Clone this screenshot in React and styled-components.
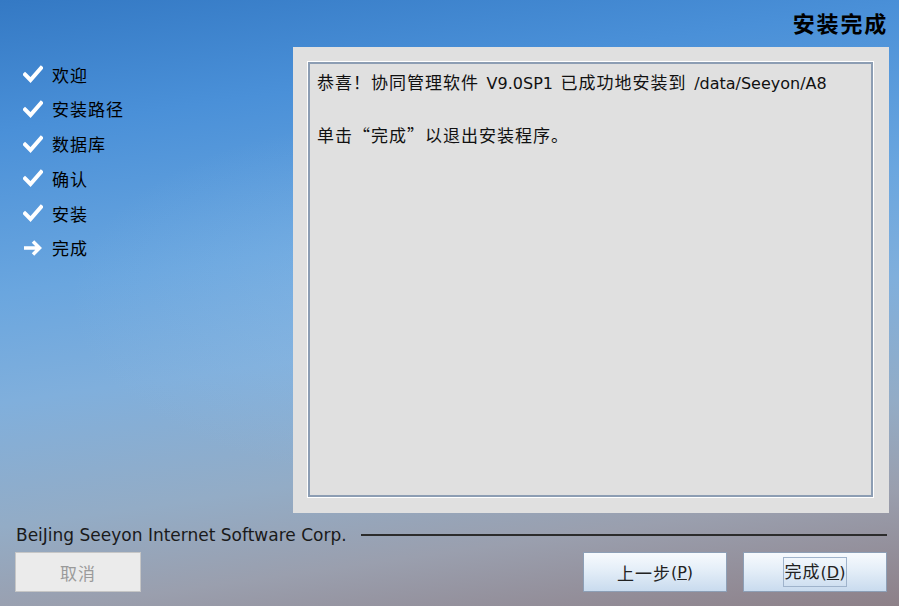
import React from 'react';
import styled, { createGlobalStyle } from 'styled-components';

const GlobalStyle = createGlobalStyle`
  html, body { margin: 0; padding: 0; }
  body {
    width: 899px;
    height: 606px;
    overflow: hidden;
    font-family: "DejaVu Sans", "Noto Sans CJK SC", sans-serif;
  }
`;

const steps = [
  { label: '欢迎', done: true },
  { label: '安装路径', done: true },
  { label: '数据库', done: true },
  { label: '确认', done: true },
  { label: '安装', done: true },
  { label: '完成', done: false },
];

const Window = styled.div`
  width: 899px;
  height: 606px;
  display: flex;
  flex-direction: column;
  background:
    radial-gradient(ellipse 500px 260px at 420px 300px, rgba(150, 195, 235, 0.35), rgba(150, 195, 235, 0) 70%),
    linear-gradient(172deg, #3479c4 0%, #4a90d8 18%, #6aa6df 40%, #80afdc 55%, #93acc6 72%, #9a9fae 84%, #8d8088 100%);
  color: #111;
`;

const Header = styled.div`
  height: 47px;
  display: flex;
  justify-content: flex-end;
  align-items: center;
  padding: 0 11px 4px 0;
  box-sizing: border-box;
`;

const Title = styled.h1`
  margin: 0;
  font-size: 22px;
  letter-spacing: 1.8px;
  font-weight: 700;
  font-family: "Noto Sans CJK SC", sans-serif;
  color: #000;
`;

const Main = styled.div`
  display: flex;
  height: 466px;
`;

const Sidebar = styled.ul`
  list-style: none;
  margin: 0;
  padding: 15px 0 0 23px;
  width: 293px;
  box-sizing: border-box;
  display: flex;
  flex-direction: column;
  gap: 10.8px;
`;

const Step = styled.li`
  display: flex;
  align-items: center;
  height: 24px;
  gap: 9px;
  font-size: 17px;
  letter-spacing: 1px;
  font-family: "Noto Sans CJK SC", sans-serif;
  color: #000;
`;

const Panel = styled.div`
  width: 596px;
  background: #e0e0e0;
  padding: 15px 16px 16px 15px;
  box-sizing: border-box;
`;

const TextArea = styled.div`
  height: 100%;
  box-sizing: border-box;
  border: 2px solid #8c9db3;
  outline: 1px solid #ffffff;
  background: #e0e0e0;
  padding: 5px 7px;
  font-size: 16px;
  color: #111;
`;

const Line = styled.p`
  margin: 0 0 ${p => (p.$gap ? '25px' : '0')};
  line-height: 26px;
  word-spacing: 2.5px;
  white-space: nowrap;
`;

const Han = styled.span`
  font-family: "Noto Sans CJK SC", sans-serif;
  font-size: 17px;
  letter-spacing: 1px;
`;

const Footer = styled.div`
  display: flex;
  flex-direction: column;
  padding: 12px 12px 0 15px;
  gap: 7px;
`;

const CorpRow = styled.div`
  display: flex;
  align-items: center;
  gap: 14px;
`;

const Corp = styled.span`
  font-family: "DejaVu Sans", sans-serif;
  font-size: 17px;
  color: #1a1a1a;
  white-space: nowrap;
  padding-left: 1px;
`;

const Rule = styled.div`
  flex: 1;
  height: 2px;
  background: #2c2c2c;
  margin-top: -1px;
`;

const ButtonRow = styled.div`
  display: flex;
  align-items: center;
`;

const Spacer = styled.div`
  flex: 1;
`;

const Button = styled.button`
  width: ${p => p.$w || 144}px;
  height: 40px;
  margin-left: ${p => p.$ml || 0}px;
  box-sizing: border-box;
  font-family: "DejaVu Sans", sans-serif;
  font-size: 16px;
  padding: 0;
  border: 1px solid ${p => (p.disabled ? '#c6c6c6' : '#8d9fb6')};
  background: ${p =>
    p.disabled ? '#ebebeb' : 'linear-gradient(#f7fafd 0%, #e4eef8 45%, #c9dbee 100%)'};
  color: ${p => (p.disabled ? '#9a9a9a' : '#222')};
  display: flex;
  align-items: center;
  justify-content: center;
`;

const Focus = styled.span`
  border: 1px solid #9fb3cb;
  padding: 0 1px;
  line-height: 26px;
`;

const U = styled.span`
  text-decoration: underline;
`;

// CJK runs get the wider CJK face, latin stays in DejaVu
function Mixed({ text }) {
  const parts = text.split(/([\u3000-\u303f\u4e00-\u9fff\uff00-\uffef\u201c\u201d]+)/);
  return parts.map((p, i) => (i % 2 ? <Han key={i}>{p}</Han> : p));
}

function Check() {
  return (
    <svg width="20" height="18" viewBox="0 0 20 18">
      <path d="M2 9.5 L7.5 15 L18 3" fill="none" stroke="#fff" strokeWidth="4" strokeLinecap="square" />
    </svg>
  );
}

function Arrow() {
  return (
    <svg width="20" height="18" viewBox="0 0 20 18">
      <path d="M1 9 H16 M10 2.5 L16.5 9 L10 15.5" fill="none" stroke="#fff" strokeWidth="3.5" />
    </svg>
  );
}

export default function App() {
  return (
    <Window>
      <GlobalStyle />
      <Header>
        <Title>安装完成</Title>
      </Header>
      <Main>
        <Sidebar>
          {steps.map(s => (
            <Step key={s.label}>
              {s.done ? <Check /> : <Arrow />}
              <span>{s.label}</span>
            </Step>
          ))}
        </Sidebar>
        <Panel>
          <TextArea>
            <Line $gap><Mixed text="恭喜！协同管理软件 V9.0SP1 已成功地安装到 /data/Seeyon/A8" /></Line>
            <Line><Mixed text="单击“完成”以退出安装程序。" /></Line>
          </TextArea>
        </Panel>
      </Main>
      <Footer>
        <CorpRow>
          <Corp>BeiJing Seeyon Internet Software Corp.</Corp>
          <Rule />
        </CorpRow>
        <ButtonRow>
          <Button disabled $w={126}><Han>取消</Han></Button>
          <Spacer />
          <Button><Han>上一步</Han>(<U>P</U>)</Button>
          <Button $ml={16}><Focus><Han>完成</Han>(<U>D</U>)</Focus></Button>
        </ButtonRow>
      </Footer>
    </Window>
  );
}
